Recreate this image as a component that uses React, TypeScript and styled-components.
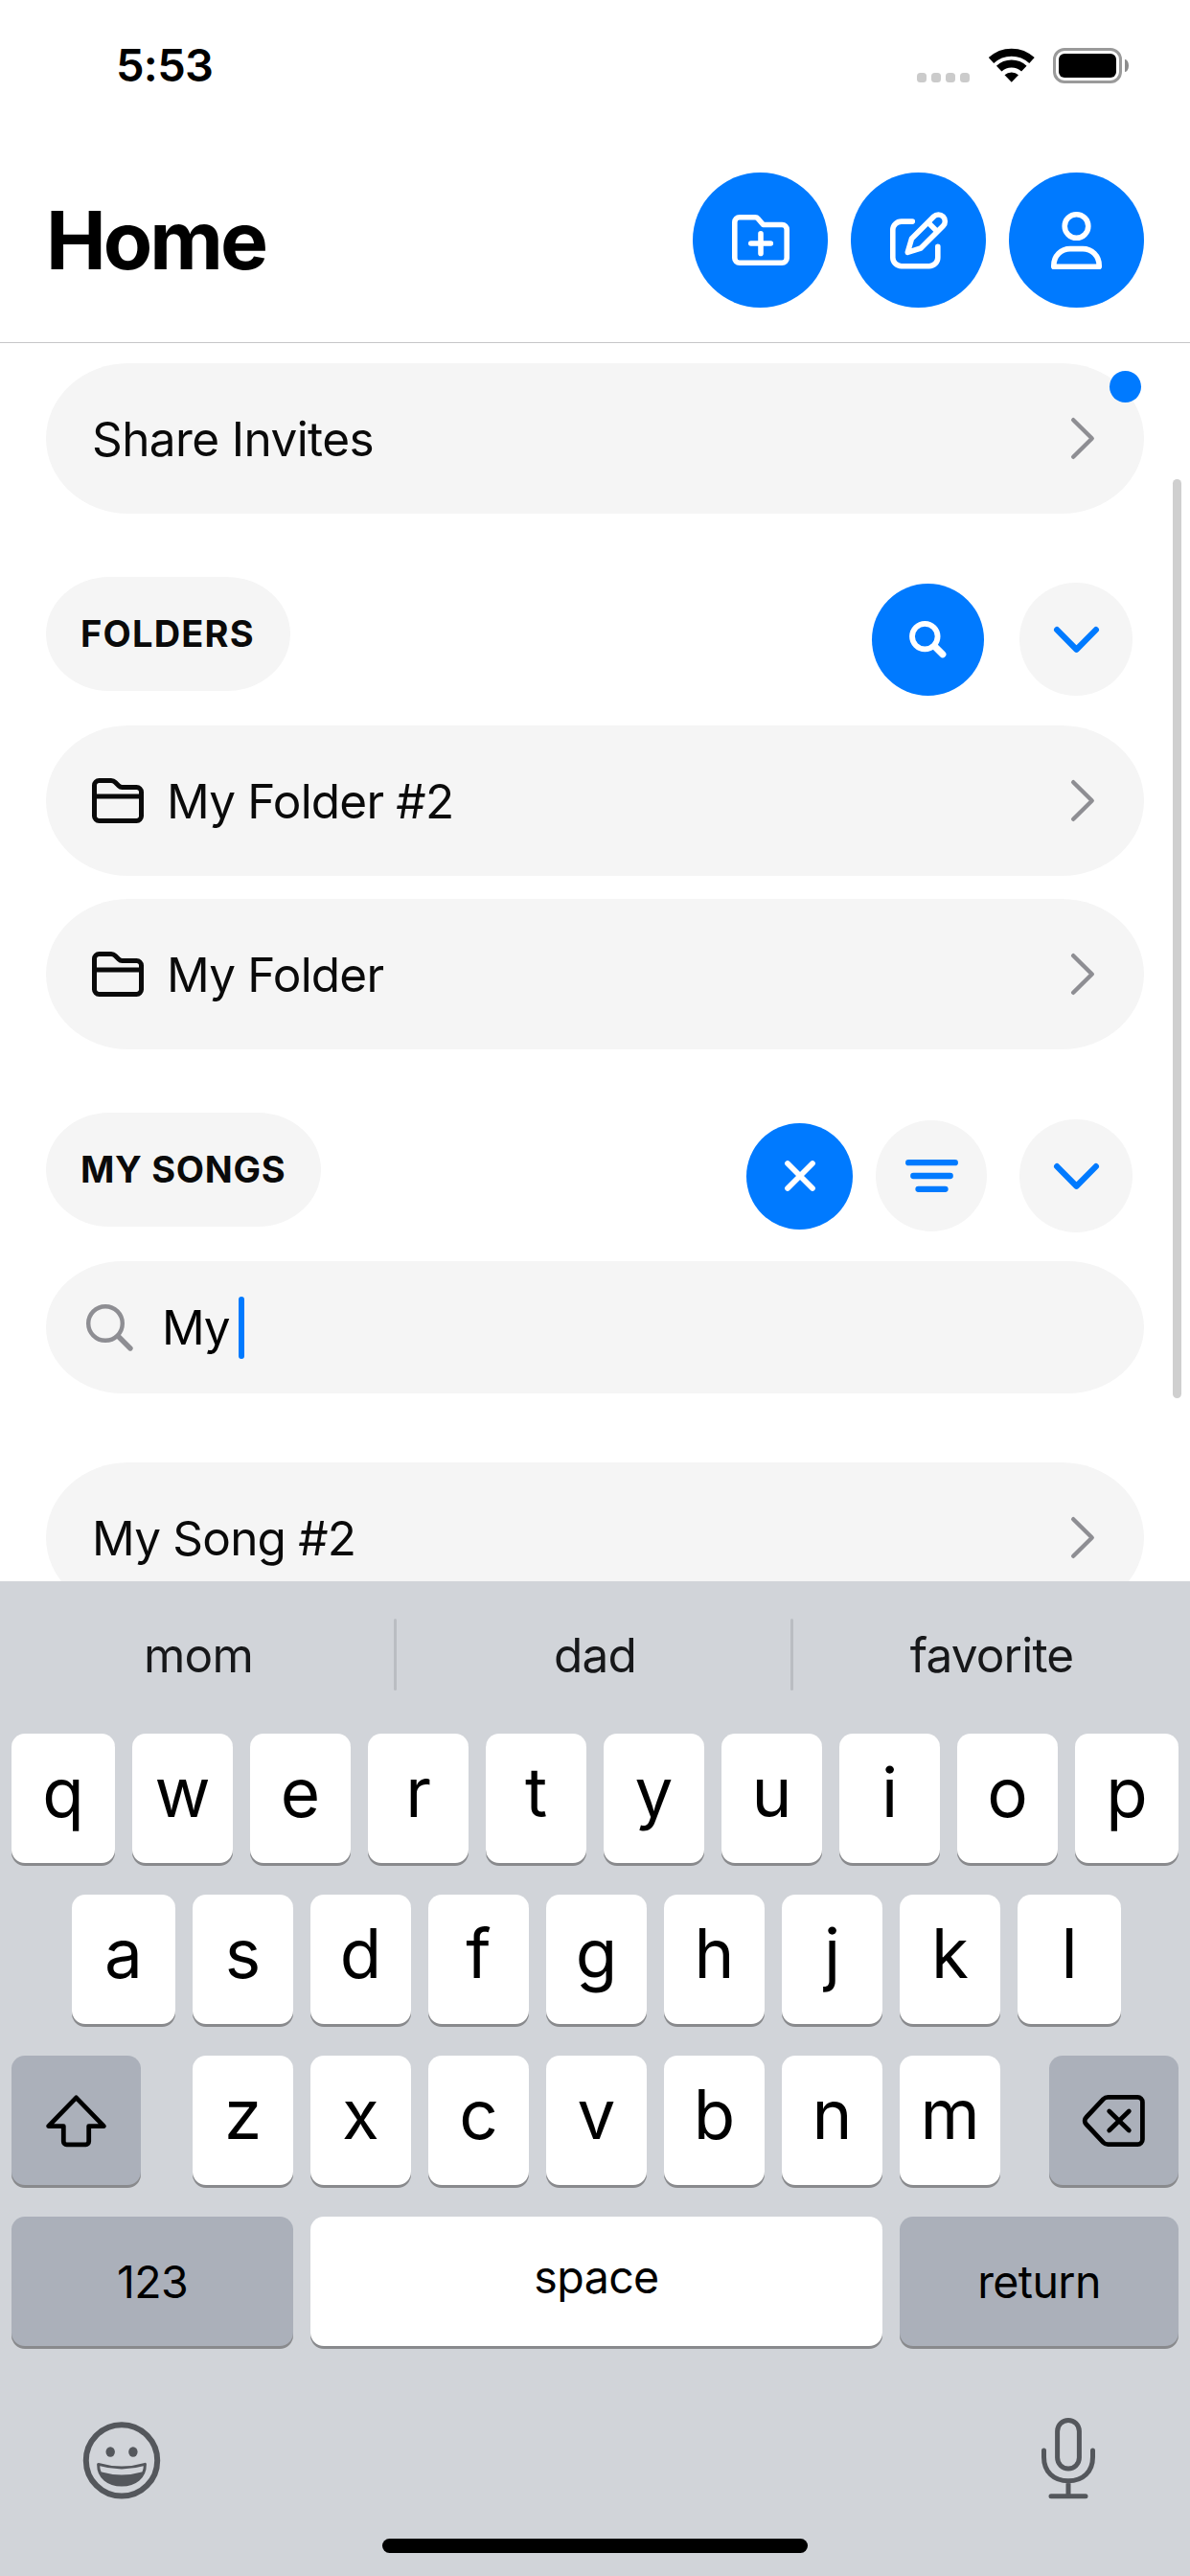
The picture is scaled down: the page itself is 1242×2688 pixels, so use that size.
import React from "react";
import styled, { createGlobalStyle, css } from "styled-components";

const blue = "#007aff";
const fill = "#f5f5f5";

const GlobalStyle = createGlobalStyle`
  *, *::before, *::after { box-sizing: border-box; }
  body { margin: 0; background: #fff; }
  svg { display: block; flex: none; overflow: visible; }
`;

const Screen = styled.div`
  display: flex;
  flex-direction: column;
  width: 1242px;
  height: 2688px;
  overflow: hidden;
  background: #fff;
  color: #0a0a0a;
  font-family: Inter, "Liberation Sans", sans-serif;
`;

/* Status bar */

const StatusBar = styled.div`
  display: flex;
  align-items: center;
  justify-content: space-between;
  height: 136px;
  padding: 0 64px 0 121px;
  color: #000;
`;

const Clock = styled.div`
  font-size: 47px;
  font-weight: 600;
  letter-spacing: -0.7px;
  line-height: 60px;
`;

const StatusIcons = styled.div`
  display: flex;
  align-items: center;
`;

const Dots = styled.div`
  display: flex;
  gap: 5px;
  margin: 25px 20px 0 0;
`;

const Dot = styled.span`
  width: 10px;
  height: 10px;
  border-radius: 3.5px;
  background: #cbcbcb;
`;

const Battery = styled.div`
  display: flex;
  width: 72px;
  height: 37px;
  margin-left: 20px;
  padding: 3px;
  border: 3px solid #9a9a9a;
  border-radius: 12px;
`;

const BatteryLevel = styled.div`
  flex: 1;
  border-radius: 6px;
  background: #000;
`;

const BatteryCap = styled.div`
  width: 4px;
  height: 13px;
  margin-left: 3px;
  border-radius: 0 4px 4px 0 / 0 7px 7px 0;
  background: #8c8c8c;
`;

/* Header */

const Header = styled.header`
  display: flex;
  align-items: center;
  justify-content: space-between;
  height: 222px;
  padding: 44px 48px 36px;
  border-bottom: 1px solid #c6c6c8;
`;

const Title = styled.h1`
  margin: 0;
  color: #000;
  font-size: 84px;
  font-weight: 700;
  letter-spacing: -3px;
  line-height: 100px;
`;

const HeaderActions = styled.div`
  display: flex;
  gap: 24px;
`;

const CircleButton = styled.button<{ $size: number; $filled?: boolean }>`
  display: flex;
  flex: none;
  align-items: center;
  justify-content: center;
  width: ${(p) => p.$size}px;
  height: ${(p) => p.$size}px;
  padding: 0;
  border: 0;
  border-radius: 50%;
  background: ${(p) => (p.$filled ? blue : fill)};
  color: ${(p) => (p.$filled ? "#fff" : blue)};
`;

/* Scrolling list */

const Content = styled.main`
  position: relative;
  flex: 0 0 1292px;
  padding: 21px 48px 0;
  overflow: hidden;
`;

const ScrollThumb = styled.div`
  position: absolute;
  top: 142px;
  right: 9px;
  width: 9px;
  height: 959px;
  border-radius: 5px;
  background: #cfcfcf;
`;

const Row = styled.div<{ $gap?: number }>`
  position: relative;
  display: flex;
  align-items: center;
  height: 157px;
  margin-top: ${(p) => p.$gap ?? 0}px;
  padding: 0 52px 0 48px;
  border-radius: 86px / 78.5px;
  background: ${fill};
`;

const RowLabel = styled.span<{ $spacing?: number }>`
  flex: 1;
  font-size: 49.5px;
  letter-spacing: ${(p) => p.$spacing ?? -0.8}px;
  line-height: 60px;
`;

const RowIcon = styled.span`
  width: 78px;
`;

const Badge = styled.span`
  position: absolute;
  top: 8px;
  right: 3px;
  width: 33px;
  height: 33px;
  border-radius: 50%;
  background: ${blue};
`;

const SectionHeader = styled.div`
  display: flex;
  align-items: flex-start;
  justify-content: space-between;
  height: 155px;
  margin-top: 66px;
  padding-right: 12px;
`;

const SectionTitle = styled.h2<{ $width: number; $spacing: number }>`
  width: ${(p) => p.$width}px;
  height: 119px;
  margin: 0;
  padding-left: 36px;
  border-radius: 66px / 59.5px;
  background: ${fill};
  font-size: 38px;
  font-weight: 700;
  letter-spacing: ${(p) => p.$spacing}px;
  line-height: 119px;
  white-space: nowrap;
`;

const SectionActions = styled.div<{ $top: number; $gap: number }>`
  display: flex;
  align-items: center;
  gap: ${(p) => p.$gap}px;
  padding-top: ${(p) => p.$top}px;
`;

const ActionPair = styled.div`
  display: flex;
  align-items: center;
  gap: 24px;
`;

const SearchField = styled.div`
  display: flex;
  align-items: center;
  height: 138px;
  padding-left: 42px;
  border-radius: 80px / 69px;
  background: ${fill};
  color: #000;
`;

const SearchText = styled.span`
  margin-left: 30px;
  font-size: 49.5px;
  letter-spacing: -1.2px;
  line-height: 60px;
`;

const Caret = styled.span`
  width: 6px;
  height: 65px;
  margin-left: 10px;
  border-radius: 3px;
  background: ${blue};
`;

/* Keyboard */

const Keyboard = styled.section`
  display: flex;
  flex: 1;
  flex-direction: column;
  background: #d1d4d9;
  color: #000;
`;

const Suggestions = styled.div`
  display: grid;
  grid-template-columns: repeat(3, 1fr);
  height: 153px;
  margin-bottom: 6px;
`;

const Suggestion = styled.div`
  position: relative;
  display: flex;
  align-items: center;
  justify-content: center;
  color: #17181a;
  font-size: 49.5px;
  letter-spacing: -0.8px;

  &:not(:last-child)::after {
    content: "";
    position: absolute;
    top: 39px;
    right: 0;
    width: 3px;
    height: 75px;
    border-radius: 2px;
    background: #babdc2;
  }
`;

const KeyRows = styled.div`
  display: flex;
  flex-direction: column;
  gap: 33px;
`;

const KeyRow = styled.div<{ $inset?: number; $spread?: boolean }>`
  display: flex;
  gap: ${(p) => (p.$spread ? 0 : 18)}px;
  justify-content: ${(p) => (p.$spread ? "space-between" : "flex-start")};
  padding: 0 ${(p) => p.$inset ?? 12}px;
`;

const LetterGroup = styled.div`
  display: flex;
  gap: 18px;
  margin-right: -3px;
`;

const keyBase = css`
  display: flex;
  flex: none;
  align-items: center;
  justify-content: center;
  height: 135px;
  border-radius: 14px;
  box-shadow: 0 3px 0 #898a8d;
`;

const LetterKey = styled.div<{ $width: number }>`
  ${keyBase}
  width: ${(p) => p.$width}px;
  padding-bottom: 14px;
  background: #fff;
  font-size: 71px;
  font-weight: 400;
`;

const WideKey = styled.div<{ $width: number; $dark?: boolean; $lift?: number; $spacing?: number }>`
  ${keyBase}
  width: ${(p) => p.$width}px;
  padding-bottom: ${(p) => p.$lift ?? 0}px;
  background: ${(p) => (p.$dark ? "#abb0ba" : "#fff")};
  font-size: 46.5px;
  letter-spacing: ${(p) => p.$spacing ?? -0.6}px;
`;

const KeyboardFooter = styled.div`
  display: flex;
  align-items: flex-start;
  justify-content: space-between;
  height: 126px;
  margin-top: 75px;
  padding: 0 99px 0 87px;
  color: #54575c;
`;

const EmojiSlot = styled.span`
  padding-top: 4px;
`;

const HomeIndicator = styled.div`
  width: 444px;
  height: 15px;
  margin: 0 auto;
  border-radius: 8px;
  background: #000;
`;

/* Icons */

const stroke = (width: number) => ({
  fill: "none",
  stroke: "currentColor",
  strokeWidth: width,
  strokeLinecap: "round" as const,
  strokeLinejoin: "round" as const,
});

const WifiIcon = () => (
  <svg width="47.5" height="36" viewBox="0 0 47.5 36">
    <g fill="none" stroke="#000" strokeWidth="8">
      <path d="M2.5 13A31.2 31.2 0 0 1 45 13" />
      <path d="M10.7 21.7A19 19 0 0 1 36.8 21.7" />
    </g>
    <path d="M23.75 35.8L16.5 28.3A10.5 10.5 0 0 1 31 28.3Z" />
  </svg>
);

const FolderPlusIcon = () => (
  <svg width="60" height="53" viewBox="0 0 60 53" {...stroke(5.6)}>
    <path d="M7.8 2.8H24.2a4 4 0 0 1 3 1.4L32.6 10.5H52.2a5 5 0 0 1 5 5V45.2a5 5 0 0 1-5 5H7.8a5 5 0 0 1-5-5V7.8a5 5 0 0 1 5-5Z" />
    <path d="M30 19.8V40.4M19.8 30H40.3" />
  </svg>
);

const ComposeIcon = () => (
  <svg width="60" height="60" viewBox="0 0 60 60" {...stroke(5.6)}>
    <path d="M23.3 10.1H11.8a9 9 0 0 0-9 9V47.7a9 9 0 0 0 9 9H40.8a9 9 0 0 0 9-9V36.2" />
    <path d="M18.3 42.3L22.5 28L45.5 5a6.9 6.9 0 0 1 9.8 9.8L32 38Z" />
    <path d="M39.5 11L49.3 20.8" strokeLinecap="butt" />
  </svg>
);

const PersonIcon = () => (
  <svg width="53" height="60" viewBox="0 0 53 60" {...stroke(5.6)}>
    <circle cx="26.5" cy="15" r="12.3" />
    <path d="M2.8 57.2V56.2C2.8 46 10.5 38.6 20 38.6H33C42.5 38.6 50.2 46 50.2 56.2V57.2Z" />
  </svg>
);

const FolderIcon = () => (
  <svg width="54" height="47" viewBox="0 0 54 47" {...stroke(5)}>
    <path d="M7.5 2.5H20a6 6 0 0 1 4.2 1.8L28 8a5 5 0 0 0 3.5 1.5H46.5a5 5 0 0 1 5 5V39.5a5 5 0 0 1-5 5H7.5a5 5 0 0 1-5-5V7.5a5 5 0 0 1 5-5ZM2.5 19H51.5" />
  </svg>
);

const ChevronRight = () => (
  <svg width="24" height="43" viewBox="0 0 24 43" {...stroke(4.4)} color="#8e8e93">
    <path d="M2.2 2.2L21.7 21.5L2.2 40.8" />
  </svg>
);

const ChevronDown = () => (
  <svg width="47" height="27" viewBox="0 0 47 27" {...stroke(6.2)}>
    <path d="M3.1 3.1L23.5 23.7L43.9 3.1" />
  </svg>
);

const BoldSearchIcon = () => (
  <svg width="39" height="39" viewBox="0 0 39 39" {...stroke(5.8)}>
    <circle cx="16.3" cy="16.1" r="13.3" />
    <path d="M27.8 27.8L34.8 34.8" strokeWidth="7.2" />
  </svg>
);

const SearchIcon = () => (
  <svg width="49" height="49" viewBox="0 0 49 49" {...stroke(4.4)} color="#8e8e93">
    <circle cx="20" cy="20" r="17.8" />
    <path d="M33.5 33.5L46 46" strokeWidth="5.4" />
  </svg>
);

const CloseIcon = () => (
  <svg width="32" height="32" viewBox="0 0 32 32" {...stroke(5.8)}>
    <path d="M3 3L29 29M29 3L3 29" />
  </svg>
);

const SortIcon = () => (
  <svg width="55" height="34" viewBox="0 0 55 34" {...stroke(6.3)}>
    <path d="M3.2 3.2H51.8M8.3 17H46.7M13.5 30.8H41.5" />
  </svg>
);

const ShiftIcon = () => (
  <svg width="63" height="54" viewBox="0 0 63 54" {...stroke(4.8)}>
    <path d="M31.5 2.8L60.4 32.6H44.7V48.6a3.2 3.2 0 0 1-3.2 3.2H21.5a3.2 3.2 0 0 1-3.2-3.2V32.6H2.6Z" />
  </svg>
);

const BackspaceIcon = () => (
  <svg width="65" height="54" viewBox="0 0 65 54" {...stroke(4.8)}>
    <path d="M26.5 2.4H57.4a5 5 0 0 1 5 5V46.6a5 5 0 0 1-5 5H26.5a7 7 0 0 1-5-2L3.6 30.5a5 5 0 0 1 0-7L21.5 4.4a7 7 0 0 1 5-2Z" />
    <path d="M27.7 17L48.3 37M48.3 17L27.7 37" />
  </svg>
);

const EmojiIcon = () => (
  <svg width="80" height="81" viewBox="0 0 80 81">
    <circle cx="40" cy="40.4" r="37.2" {...stroke(6)} />
    <ellipse cx="28.2" cy="31.5" rx="4.7" ry="5.2" fill="currentColor" />
    <ellipse cx="51.9" cy="31.5" rx="4.7" ry="5.2" fill="currentColor" />
    <path d="M15.6 44.4Q40 51.6 64.4 44.4C64.4 58 54 66 40 66C26 66 15.6 58 15.6 44.4Z" {...stroke(3)} />
    <path d="M18 52.2Q40 58.6 62 52.2C59 61.5 50 67 40 67C30 67 21 61.5 18 52.2Z" fill="currentColor" />
  </svg>
);

const MicIcon = () => (
  <svg width="56" height="85" viewBox="0 0 56 85" {...stroke(5)}>
    <rect x="16.6" y="2.5" width="22.8" height="50.5" rx="11.4" />
    <path d="M2.5 34V41C2.5 56 12.5 65.8 28 65.8S53.5 56 53.5 41V34M28 65.8V81.6M10 81.8H46" />
  </svg>
);

const letterWidth = (index: number, count: number) =>
  index === 0 || index === count - 1 ? 108 : 105;

const Letters = ({ keys }: { keys: string }) => (
  <>
    {keys.split("").map((key, i) => (
      <LetterKey key={key} $width={letterWidth(i, keys.length)}>
        {key}
      </LetterKey>
    ))}
  </>
);

const FolderRow = ({ name, gap }: { name: string; gap?: number }) => (
  <Row $gap={gap}>
    <RowIcon>
      <FolderIcon />
    </RowIcon>
    <RowLabel>{name}</RowLabel>
    <ChevronRight />
  </Row>
);

export default function App() {
  return (
    <Screen>
      <GlobalStyle />
      <StatusBar>
        <Clock>5:53</Clock>
        <StatusIcons>
          <Dots>
            <Dot />
            <Dot />
            <Dot />
            <Dot />
          </Dots>
          <WifiIcon />
          <Battery>
            <BatteryLevel />
          </Battery>
          <BatteryCap />
        </StatusIcons>
      </StatusBar>

      <Header>
        <Title>Home</Title>
        <HeaderActions>
          <CircleButton $size={141} $filled aria-label="New folder">
            <FolderPlusIcon />
          </CircleButton>
          <CircleButton $size={141} $filled aria-label="New song">
            <ComposeIcon />
          </CircleButton>
          <CircleButton $size={141} $filled aria-label="Profile">
            <PersonIcon />
          </CircleButton>
        </HeaderActions>
      </Header>

      <Content>
        <Row>
          <RowLabel $spacing={-0.6}>Share Invites</RowLabel>
          <ChevronRight />
          <Badge />
        </Row>

        <SectionHeader>
          <SectionTitle $width={255} $spacing={1.2}>FOLDERS</SectionTitle>
          <SectionActions $top={6} $gap={37}>
            <CircleButton $size={117} $filled aria-label="Search folders">
              <BoldSearchIcon />
            </CircleButton>
            <CircleButton $size={118} aria-label="Collapse folders">
              <ChevronDown />
            </CircleButton>
          </SectionActions>
        </SectionHeader>
        <FolderRow name="My Folder #2" />
        <FolderRow name="My Folder" gap={24} />

        <SectionHeader>
          <SectionTitle $width={287} $spacing={0.7}>MY SONGS</SectionTitle>
          <SectionActions $top={7} $gap={34}>
            <ActionPair>
              <CircleButton $size={111} $filled aria-label="Close search">
                <CloseIcon />
              </CircleButton>
              <CircleButton $size={116} aria-label="Sort songs">
                <SortIcon />
              </CircleButton>
            </ActionPair>
            <CircleButton $size={118} aria-label="Collapse songs">
              <ChevronDown />
            </CircleButton>
          </SectionActions>
        </SectionHeader>
        <SearchField>
          <SearchIcon />
          <SearchText>My</SearchText>
          <Caret />
        </SearchField>
        <Row $gap={72}>
          <RowLabel>My Song #2</RowLabel>
          <ChevronRight />
        </Row>
        <ScrollThumb />
      </Content>

      <Keyboard>
        <Suggestions>
          <Suggestion>mom</Suggestion>
          <Suggestion>dad</Suggestion>
          <Suggestion>favorite</Suggestion>
        </Suggestions>
        <KeyRows>
          <KeyRow>
            <Letters keys="qwertyuiop" />
          </KeyRow>
          <KeyRow $inset={75}>
            <Letters keys="asdfghjkl" />
          </KeyRow>
          <KeyRow $spread>
            <WideKey $width={135} $dark>
              <ShiftIcon />
            </WideKey>
            <LetterGroup>
              {"zxcvbnm".split("").map((key) => (
                <LetterKey key={key} $width={105}>
                  {key}
                </LetterKey>
              ))}
            </LetterGroup>
            <WideKey $width={135} $dark>
              <BackspaceIcon />
            </WideKey>
          </KeyRow>
          <KeyRow>
            <WideKey $width={294} $dark>
              123
            </WideKey>
            <WideKey $width={597} $lift={9}>
              space
            </WideKey>
            <WideKey $width={291} $dark>
              return
            </WideKey>
          </KeyRow>
        </KeyRows>
        <KeyboardFooter>
          <EmojiSlot>
            <EmojiIcon />
          </EmojiSlot>
          <MicIcon />
        </KeyboardFooter>
        <HomeIndicator />
      </Keyboard>
    </Screen>
  );
}
